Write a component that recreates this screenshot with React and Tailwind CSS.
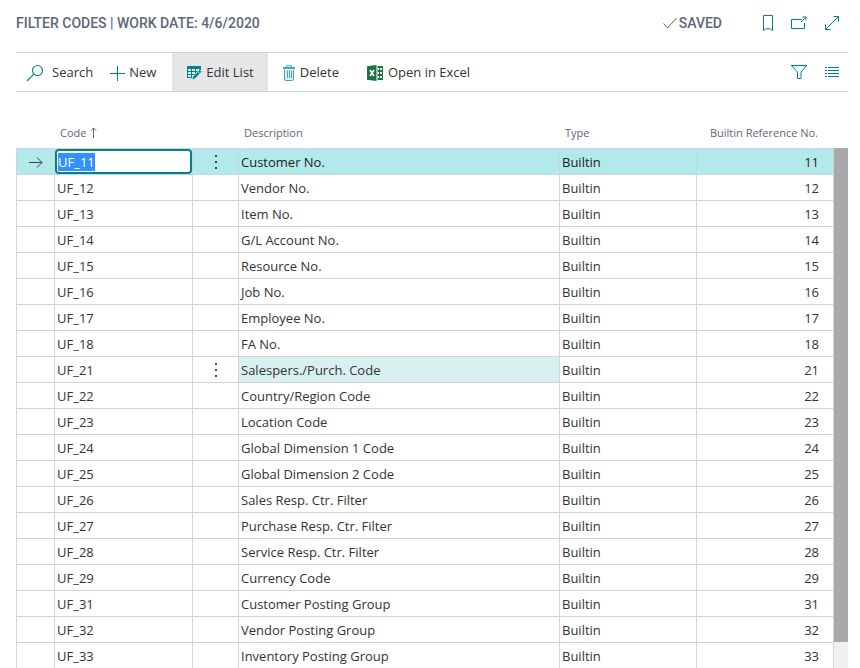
import React, { useState } from 'react';

const initialRows = [
  { code: 'UF_11', description: 'Customer No.', type: 'Builtin', ref: 11 },
  { code: 'UF_12', description: 'Vendor No.', type: 'Builtin', ref: 12 },
  { code: 'UF_13', description: 'Item No.', type: 'Builtin', ref: 13 },
  { code: 'UF_14', description: 'G/L Account No.', type: 'Builtin', ref: 14 },
  { code: 'UF_15', description: 'Resource No.', type: 'Builtin', ref: 15 },
  { code: 'UF_16', description: 'Job No.', type: 'Builtin', ref: 16 },
  { code: 'UF_17', description: 'Employee No.', type: 'Builtin', ref: 17 },
  { code: 'UF_18', description: 'FA No.', type: 'Builtin', ref: 18 },
  { code: 'UF_21', description: 'Salespers./Purch. Code', type: 'Builtin', ref: 21 },
  { code: 'UF_22', description: 'Country/Region Code', type: 'Builtin', ref: 22 },
  { code: 'UF_23', description: 'Location Code', type: 'Builtin', ref: 23 },
  { code: 'UF_24', description: 'Global Dimension 1 Code', type: 'Builtin', ref: 24 },
  { code: 'UF_25', description: 'Global Dimension 2 Code', type: 'Builtin', ref: 25 },
  { code: 'UF_26', description: 'Sales Resp. Ctr. Filter', type: 'Builtin', ref: 26 },
  { code: 'UF_27', description: 'Purchase Resp. Ctr. Filter', type: 'Builtin', ref: 27 },
  { code: 'UF_28', description: 'Service Resp. Ctr. Filter', type: 'Builtin', ref: 28 },
  { code: 'UF_29', description: 'Currency Code', type: 'Builtin', ref: 29 },
  { code: 'UF_31', description: 'Customer Posting Group', type: 'Builtin', ref: 31 },
  { code: 'UF_32', description: 'Vendor Posting Group', type: 'Builtin', ref: 32 },
  { code: 'UF_33', description: 'Inventory Posting Group', type: 'Builtin', ref: 33 },
];

const Icon = ({ width = 16, height = 16, className = 'text-[#008489]', children }) => (
  <svg
    width={width}
    height={height}
    viewBox={`0 0 ${width} ${height}`}
    fill="none"
    stroke="currentColor"
    className={`shrink-0 ${className}`}
    aria-hidden="true"
  >
    {children}
  </svg>
);

const SearchIcon = () => (
  <Icon width={18} height={18}>
    <circle cx="11.5" cy="6.5" r="5" strokeWidth="1.1" />
    <path d="M7.8 10.2L1 17" strokeWidth="1.2" />
  </Icon>
);

const PlusIcon = () => (
  <Icon>
    <path d="M8.5 1v15M1 8.5h15" />
  </Icon>
);

const EditListIcon = () => (
  <Icon>
    <path d="M1 1h14v4L9 12.5V13H1z" fill="currentColor" stroke="none" />
    <path d="M2 5h3M6 5h3M10 5h3M2 8h3M6 8h3M10 8h2M2 11h3M6 11h2" stroke="#e5e6e8" strokeWidth="2" />
    <path d="M13.6 4.6l2.2 2.2-6.6 6.8-3.4 1.6 1.2-3.8z" fill="currentColor" stroke="#e5e6e8" strokeWidth="0.8" />
    <path d="M12 6.6l2 2" stroke="#e5e6e8" strokeWidth="0.8" />
  </Icon>
);

const DeleteIcon = () => (
  <Icon width={14} height={16} className="text-[#45a9b0]">
    <path d="M2.5 4.5V14a1.5 1.5 0 0 0 1.5 1.5h6a1.5 1.5 0 0 0 1.5-1.5V4.5" fill="#d8eef0" />
    <path d="M1 3h12" strokeWidth="2" />
    <path d="M4.5 2V.8h5V2" />
    <path d="M5.5 5.5v7.5M7.5 5.5v7.5M9.5 5.5v7.5" />
  </Icon>
);

const ExcelIcon = () => (
  <Icon width={17} height={16} className="text-[#1e7145]">
    <path d="M0 1.2L9.5 0v16L0 14.8z" fill="currentColor" stroke="none" />
    <path d="M10.5 1H16v14h-5.5z" fill="currentColor" stroke="none" />
    <path d="M10.5 4H12M10.5 8H12M10.5 12H12M13 4h2M13 8h2M13 12h2" stroke="#fff" strokeWidth="2" />
    <path d="M3 5l4 6M7 5l-4 6" stroke="#fff" strokeWidth="1.6" />
  </Icon>
);

const FilterIcon = () => (
  <Icon width={18} height={16}>
    <path d="M1.5 1.5h15l-5.5 6.5v6.5H7.5V8z" />
    <path d="M1 1.5h16" strokeWidth="1.2" />
  </Icon>
);

const ListIcon = () => (
  <Icon>
    <path d="M4 3.5h11M4 6.5h11M4 9.5h11M4 12.5h11" />
    <path d="M1 3.5h2M1 6.5h2M1 9.5h2M1 12.5h2" />
  </Icon>
);

const BookmarkIcon = () => (
  <Icon width={12} height={18}>
    <path d="M1.5 1.5h9v14.8q-4.5-3.4-9 0z" />
  </Icon>
);

const PopOutIcon = () => (
  <Icon width={18} height={16}>
    <path d="M11.5 4.5h-10v9h13V8" />
    <path d="M11 7l5-5M12.5 2h3.5v3.5" />
  </Icon>
);

const ExpandIcon = () => (
  <Icon>
    <path d="M1.5 14.5l13-13M9.5 1.5h5v5M1.5 9.5v5h5" />
  </Icon>
);

const MoreButton = ({ code }) => (
  <button type="button" aria-label={`More options for ${code}`} className="flex w-full h-[25px] items-center justify-center">
    <svg width="2" height="14" viewBox="0 0 2 14" fill="#444" aria-hidden="true">
      <path d="M0 0h2v2H0zM0 6h2v2H0zM0 12h2v2H0z" />
    </svg>
  </button>
);

const App = () => {
  const [rows, setRows] = useState(initialRows);

  const handleCodeChange = (e) => {
    const { value } = e.target;
    setRows((prev) => prev.map((row, i) => (i === 0 ? { ...row, code: value } : row)));
  };

  return (
    <main className="flex flex-col h-screen overflow-hidden bg-white pl-4 pr-3 font-['Open_Sans','Noto_Sans',sans-serif] text-[13px] text-[#333]">
      <header className="flex shrink-0 items-center justify-between h-[52px] pb-1.5 font-['Roboto',sans-serif] text-sm font-medium text-[#5c6779]">
        <h1>FILTER CODES | WORK DATE: 4/6/2020</h1>
        <div className="flex items-center">
          <span className="flex items-center gap-0.5 mr-10">
            <Icon width={14} height={12} className="text-[#5c6779]">
              <path d="M.5 6.5L4.5 11 13.5 1" />
            </Icon>
            SAVED
          </span>
          <div className="flex items-center gap-4 pr-2">
            <button type="button" aria-label="Bookmark"><BookmarkIcon /></button>
            <button type="button" aria-label="Open in new window"><PopOutIcon /></button>
            <button type="button" aria-label="Expand"><ExpandIcon /></button>
          </div>
        </div>
      </header>

      <nav className="flex shrink-0 items-stretch justify-between h-10 border-y border-[#d0d3d9]">
        <div className="flex items-stretch *:pt-[2px]">
          <button type="button" className="flex items-center gap-2 pl-2.5 pr-2"><SearchIcon />Search</button>
          <button type="button" className="flex items-center gap-1 pl-2 pr-4"><PlusIcon />New</button>
          <button type="button" className="flex items-center gap-1 px-3.5 bg-[#e5e6e8]"><EditListIcon />Edit List</button>
          <button type="button" className="flex items-center gap-1 px-3.5"><DeleteIcon />Delete</button>
          <button type="button" className="flex items-center gap-1 px-3.5"><ExcelIcon />Open in Excel</button>
        </div>
        <div className="flex items-center gap-4 pr-2">
          <button type="button" aria-label="Filter"><FilterIcon /></button>
          <button type="button" aria-label="Show as list"><ListIcon /></button>
        </div>
      </nav>

      <div className="flex flex-1 min-h-0 pt-5">
        <div className="flex-1 min-w-0 overflow-hidden">
          <table className="w-full table-fixed border-separate border-spacing-0">
            <colgroup>
              <col className="w-[39px]" />
              <col className="w-[138px]" />
              <col className="w-[46px]" />
              <col />
              <col className="w-[137px]" />
              <col className="w-[137px]" />
            </colgroup>
            <thead>
              <tr className="h-[37px] text-left text-[11px] leading-4 text-[#5c6779] *:border-b *:border-[#d0d3d9] *:pb-[7px] *:align-bottom *:font-normal">
                <th aria-label="Selected" />
                <th aria-sort="ascending" className="pl-[5px]">
                  <span className="flex items-center gap-1">
                    Code
                    <Icon width={7} height={12} className="text-[#5c6779]">
                      <path d="M3.5 11V1M.8 3.7L3.5 1l2.7 2.7" />
                    </Icon>
                  </span>
                </th>
                <th aria-label="Options" />
                <th className="pl-[5px]">Description</th>
                <th className="pl-[5px]">Type</th>
                <th className="pr-4 text-right whitespace-nowrap">Builtin Reference No.</th>
              </tr>
            </thead>
            <tbody>
              {rows.map((row, i) => (
                <tr
                  key={row.ref}
                  className={`h-[26px] leading-[23px] *:border-r *:border-b *:border-[#d0d3d9] ${i === 0 ? 'bg-[#b2e9eb] text-[#222]' : ''}`}
                >
                  <td className="border-l">
                    {i === 0 && (
                      <Icon width={14} height={12} className="mx-auto text-[#444]">
                        <path d="M0 6.5h13M8 1.5l5 5-5 5" />
                      </Icon>
                    )}
                  </td>
                  {i === 0 ? (
                    <td>
                      <input
                        type="text"
                        aria-label="Code"
                        value={row.code}
                        onChange={handleCodeChange}
                        onFocus={(e) => e.target.select()}
                        autoFocus
                        className="block w-full h-[25px] rounded border-2 border-[#008489] bg-white px-px pt-px outline-none selection:bg-[#3390ff] selection:text-white"
                      />
                    </td>
                  ) : (
                    <td className="pt-[2px] pl-[2px]">{row.code}</td>
                  )}
                  <td>{(i === 0 || row.ref === 21) && <MoreButton code={row.code} />}</td>
                  <td className={`pt-[2px] pl-[2px] ${row.ref === 21 ? 'bg-[#d9f0f1]' : ''}`}>{row.description}</td>
                  <td className="pt-[2px] pl-[2px]">{row.type}</td>
                  <td className="pt-[2px] pr-[14px] text-right">{row.ref}</td>
                </tr>
              ))}
            </tbody>
          </table>
        </div>
        <div className="w-[14px] shrink-0 pt-9" aria-hidden="true">
          <div className="h-full bg-[#f0f0f0]">
            <div className="h-[95%] bg-[#a9a9a9]" />
          </div>
        </div>
      </div>
    </main>
  );
};

export default App;
